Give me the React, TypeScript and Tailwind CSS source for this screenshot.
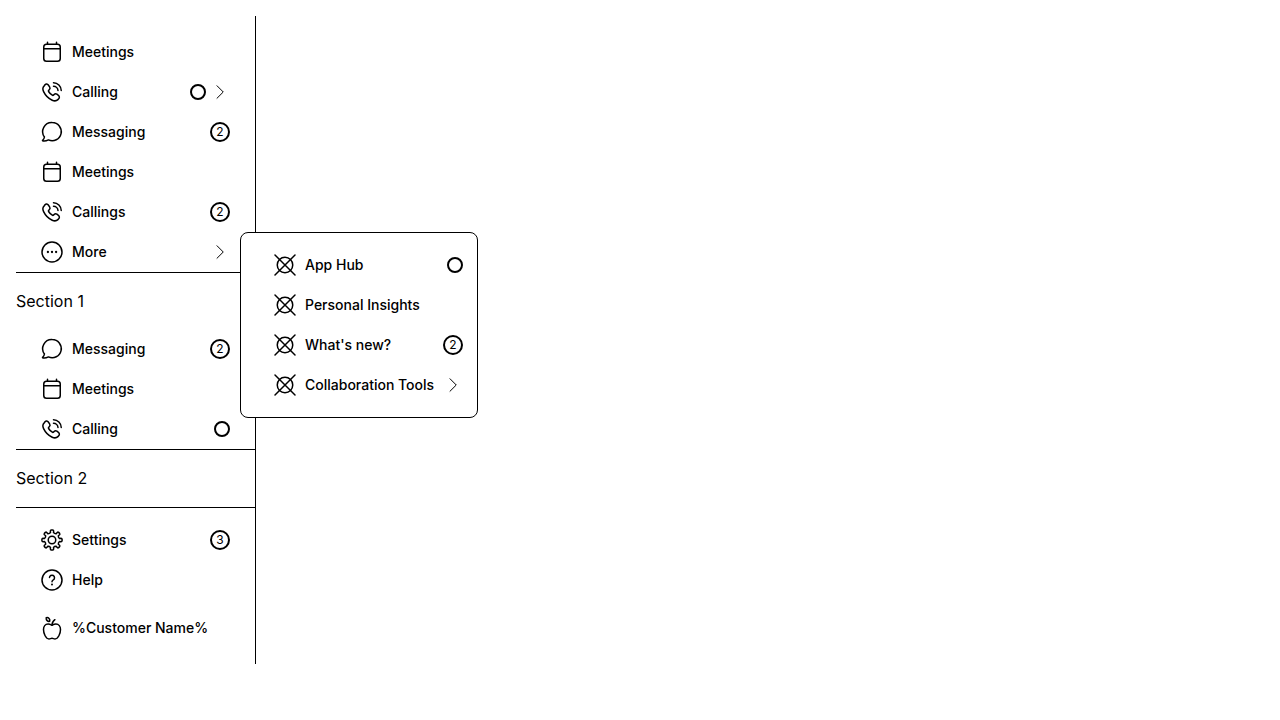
import type { ReactNode } from "react";

type IconName = "meetings" | "calling" | "messaging" | "more" | "settings" | "help" | "apple" | "placeholder";

const gearPath = (() => {
  const points: string[] = [];
  const step = Math.PI / 4;
  const at = (radius: number, angle: number) =>
    `${(12 + radius * Math.sin(angle)).toFixed(2)} ${(12 - radius * Math.cos(angle)).toFixed(2)}`;
  for (let i = 0; i < 8; i++) {
    const a = i * step;
    points.push(`${i === 0 ? "M" : "L"}${at(7.6, a - 0.2)}`);
    points.push(`L${at(9.2, a - 0.18)}`);
    points.push(`Q${at(10.1, a - 0.16)} ${at(10.1, a - 0.07)}`);
    points.push(`L${at(10.1, a + 0.07)}`);
    points.push(`Q${at(10.1, a + 0.16)} ${at(9.2, a + 0.18)}`);
    points.push(`L${at(7.6, a + 0.2)}`);
    points.push(`Q${at(6.7, a + step / 2)} ${at(7.6, a + step - 0.2)}`);
  }
  return points.join("") + "Z";
})();

const drawings: Record<IconName, ReactNode> = {
  meetings: (
    <>
      <rect x="3.75" y="4.25" width="16.5" height="17" rx="2.75" />
      <path d="M3.75 8.75h16.5M7.5 2.25v2M16.5 2.25v2" />
    </>
  ),
  calling: (
    <>
      <path d="M8.3 5 9.6 6.9a2.2 2.2 0 0 1-.3 2.8l-.6.6a1 1 0 0 0-.1 1.2c.9 1.5 2.2 2.8 3.7 3.7a1 1 0 0 0 1.2-.1l.6-.6a2.2 2.2 0 0 1 2.8-.3l1.5 1.1a2.3 2.3 0 0 1 .3 3.5l-.8.8c-1.4 1.4-3.7 1.5-5.7.6C8.500 18.500 5.400 15.400 3.600 11.600c-1-2-.9-4.200.5-5.600l.9-1.300a2.150 2.150 0 0 1 3.300.3Z" />
      <path d="M13.500 2.750a8 8 0 0 1 7.750 7.750M13.500 6.250a4.500 4.500 0 0 1 4.500 4.250" />
    </>
  ),
  messaging: (
    <path d="M12.250 2.500a9.100 9.100 0 1 1-3.800 17.400c-1.700.9-3.900 1.400-5.500 1.100-.5-.1-.6-.5-.2-.8.9-.8 1.500-2 1.700-3.200A9.100 9.100 0 0 1 12.250 2.500Z" />
  ),
  more: (
    <>
      <circle cx="12" cy="12" r="10" />
      <g fill="currentColor" stroke="none">
        <circle cx="7.900" cy="12" r="1.150" />
        <circle cx="12" cy="12" r="1.150" />
        <circle cx="16.100" cy="12" r="1.150" />
      </g>
    </>
  ),
  settings: (
    <>
      <path d={gearPath} />
      <circle cx="12" cy="12" r="3.750" />
    </>
  ),
  help: (
    <>
      <circle cx="12" cy="12" r="10" />
      <path d="M9.500 9.600a2.500 2.500 0 1 1 3.800 2.200c-.8.500-1.300.9-1.300 1.900" />
      <circle cx="12" cy="16.400" r="1" fill="currentColor" stroke="none" />
    </>
  ),
  apple: (
    <>
      <path d="M12 9.200c1.300-.6 2.500-1.200 3.900-1.200 2.900 0 4.600 2.500 4.600 5.600 0 4-2.400 9.300-5.500 9.300-1.200 0-1.900-.6-3-.6s-1.800.6-3 .6c-3.100 0-5.500-5.300-5.500-9.300C3.500 10.500 5.200 8 8.100 8c1.400 0 2.600.6 3.900 1.200Z" />
      <path d="M12 9.200c0-2.100.9-4.100 2.900-5.500" />
      <path d="M9.700 5.300C7.700 5.700 6 4.300 6.200 1.700 8.600 1.200 10.300 2.900 9.700 5.300Z" />
    </>
  ),
  placeholder: (
    <>
      <circle cx="12" cy="12" r="7.750" />
      <path d="M2 2l20 20M22 2 2 22" />
    </>
  ),
};

function Icon({ name }: { name: IconName }) {
  return (
    <svg
      viewBox="0 0 24 24"
      className="size-6 shrink-0"
      fill="none"
      stroke="currentColor"
      strokeWidth="1.5"
      strokeLinecap="round"
      strokeLinejoin="round"
      aria-hidden="true"
    >
      {drawings[name]}
    </svg>
  );
}

function Chevron() {
  return (
    <svg viewBox="0 0 20 20" className="size-5 shrink-0" fill="none" stroke="currentColor" strokeLinecap="round" aria-hidden="true">
      <path d="m7 3.750 6.250 6.250L7 16.250" />
    </svg>
  );
}

type Item = {
  label: string;
  icon: IconName;
  count?: number;
  dot?: boolean;
  arrow?: boolean;
  submenu?: Item[];
};

const mainItems: Item[] = [
  { label: "Meetings", icon: "meetings" },
  { label: "Calling", icon: "calling", dot: true, arrow: true },
  { label: "Messaging", icon: "messaging", count: 2 },
  { label: "Meetings", icon: "meetings" },
  { label: "Callings", icon: "calling", count: 2 },
  {
    label: "More",
    icon: "more",
    arrow: true,
    submenu: [
      { label: "App Hub", icon: "placeholder", dot: true },
      { label: "Personal Insights", icon: "placeholder" },
      { label: "What's new?", icon: "placeholder", count: 2 },
      { label: "Collaboration Tools", icon: "placeholder", arrow: true },
    ],
  },
];

const sectionItems: Item[] = [
  { label: "Messaging", icon: "messaging", count: 2 },
  { label: "Meetings", icon: "meetings" },
  { label: "Calling", icon: "calling", dot: true },
];

const footerItems: Item[] = [
  { label: "Settings", icon: "settings", count: 3 },
  { label: "Help", icon: "help" },
];

function NavItem({ item }: { item: Item }) {
  const content = (
    <>
      <Icon name={item.icon} />
      <span className="grow whitespace-nowrap">{item.label}</span>
      {item.dot && <span className="size-4 shrink-0 rounded-full border-2 border-black" />}
      {item.count !== undefined && (
        <span className="flex size-5 shrink-0 items-center justify-center rounded-full border-2 border-black text-xs font-normal">
          {item.count}
        </span>
      )}
      {item.arrow && (
        <span className={item.dot ? "-ml-1" : ""}>
          <Chevron />
        </span>
      )}
    </>
  );
  const row = "flex h-10 w-full items-center gap-2 pl-6 text-left text-sm font-medium";
  return (
    <li className="relative">
      {item.arrow ? (
        <button type="button" className={row} aria-haspopup="true" aria-expanded={item.submenu !== undefined}>
          {content}
        </button>
      ) : (
        <a href="#" className={row}>
          {content}
        </a>
      )}
      {item.submenu && (
        <ul className="absolute top-0 left-56 z-10 min-w-[238px] rounded-lg border border-black bg-white py-3 pr-3.5 pl-2">
          {item.submenu.map((child) => (
            <NavItem key={child.label} item={child} />
          ))}
        </ul>
      )}
    </li>
  );
}

function NavList({ items }: { items: Item[] }) {
  return (
    <ul className="pr-[25px]">
      {items.map((item, index) => (
        <NavItem key={index} item={item} />
      ))}
    </ul>
  );
}

export default function App() {
  return (
    <div className="p-4 font-['Inter',sans-serif] text-black">
      <nav className="w-60 border-r border-black py-4" aria-label="Main">
        <NavList items={mainItems} />
        <hr className="border-black" />
        <h2 className="py-4 text-base">Section 1</h2>
        <NavList items={sectionItems} />
        <hr className="border-black" />
        <h2 className="py-4 text-base">Section 2</h2>
        <hr className="mt-px border-black" />
        <div className="pt-3">
          <NavList items={footerItems} />
        </div>
        <div className="pt-2">
          <NavList items={[{ label: "%Customer Name%", icon: "apple" }]} />
        </div>
      </nav>
    </div>
  );
}
